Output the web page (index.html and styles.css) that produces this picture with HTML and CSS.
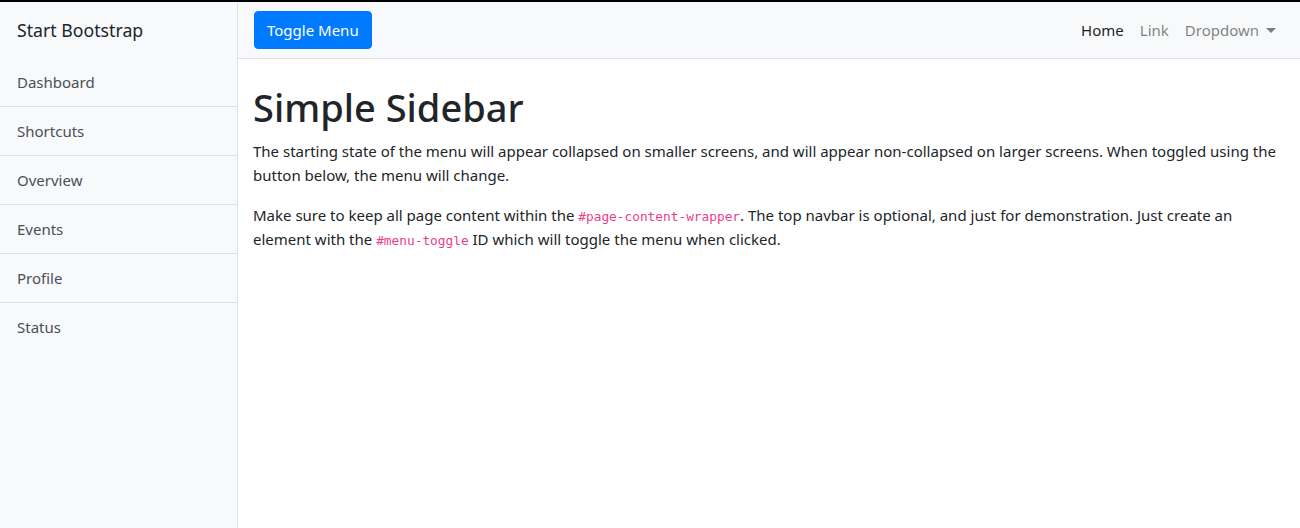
FILE: index.html
```html
<!DOCTYPE html>
<html>
<head>
<meta charset="utf-8">
<link rel="stylesheet" href="styles.css">
</head>
<body>
<div class="wrapper">
  <aside class="sidebar">
    <div class="sidebar-heading">Start Bootstrap</div>
    <div class="list-group">
      <a href="#" class="list-item">Dashboard</a>
      <a href="#" class="list-item">Shortcuts</a>
      <a href="#" class="list-item">Overview</a>
      <a href="#" class="list-item">Events</a>
      <a href="#" class="list-item">Profile</a>
      <a href="#" class="list-item">Status</a>
    </div>
  </aside>
  <div class="page">
    <nav class="navbar">
      <button class="btn-toggle">Toggle Menu</button>
      <ul class="nav">
        <li><a href="#" class="nav-link active">Home</a></li>
        <li><a href="#" class="nav-link">Link</a></li>
        <li><a href="#" class="nav-link dropdown">Dropdown<span class="caret"></span></a></li>
      </ul>
    </nav>
    <main class="content">
      <h1 class="title">Simple Sidebar</h1>
      <p class="text">The starting state of the menu will appear collapsed on smaller screens, and will appear non-collapsed on larger screens. When toggled using the button below, the menu will change.</p>
      <p class="text">Make sure to keep all page content within the <code class="code">#page-content-wrapper</code>. The top navbar is optional, and just for demonstration. Just create an element with the <code class="code">#menu-toggle</code> ID which will toggle the menu when clicked.</p>
    </main>
  </div>
</div>
</body>
</html>
```

FILE: styles.css
```css
* { box-sizing: border-box; }
html, body { margin: 0; padding: 0; height: 100%; }
body {
  font-family: "Noto Sans", "Open Sans", sans-serif;
  font-size: 15px;
  line-height: 24px;
  color: #212529;
  background: #fff;
  border-top: 2px solid #000;
}
.wrapper { display: flex; height: 100%; }
.sidebar {
  width: 238px;
  flex: none;
  background: #f8f9fa;
  border-right: 1px solid #dee2e6;
}
.sidebar-heading {
  padding: 14px 17px;
  font-size: 17.7px;
  line-height: 28px;
}
.list-group { display: flex; flex-direction: column; }
.list-item {
  display: block;
  padding: 12px 17px;
  color: #495057;
  text-decoration: none;
  border-bottom: 1px solid #dee2e6;
  line-height: 24px;
}
.list-item:last-child { border-bottom: 0; }
.page { flex: 1; min-width: 0; }
.navbar {
  display: flex;
  align-items: center;
  justify-content: space-between;
  padding: 8px 16px;
  background: #f8f9fa;
  border-bottom: 1px solid #dee2e6;
}
.btn-toggle {
  font: inherit;
  color: #fff;
  background: #007bff;
  border: 1px solid #007bff;
  border-radius: 4px;
  padding: 6px 12px;
  line-height: 24px;
}
.nav { display: flex; list-style: none; margin: 0; padding: 0; }
.nav-link {
  display: block;
  padding: 8px 8px;
  color: rgba(0,0,0,.5);
  text-decoration: none;
  line-height: 24px;
}
.nav-link.active { color: rgba(0,0,0,.9); }
.caret {
  display: inline-block;
  margin-left: 7px;
  vertical-align: 3px;
  border-top: 5px solid;
  border-left: 5px solid transparent;
  border-right: 5px solid transparent;
}
.content { padding: 0 15px; }
.title {
  margin: 24px 0 8px;
  font-size: 38px;
  font-weight: 500;
  line-height: 48px;
}
.text { margin: 0 0 16px; }
.code {
  font-family: "DejaVu Sans Mono", "Liberation Mono", monospace;
  font-size: 12.8px;
  line-height: 1;
  color: #e83e8c;
}
```
